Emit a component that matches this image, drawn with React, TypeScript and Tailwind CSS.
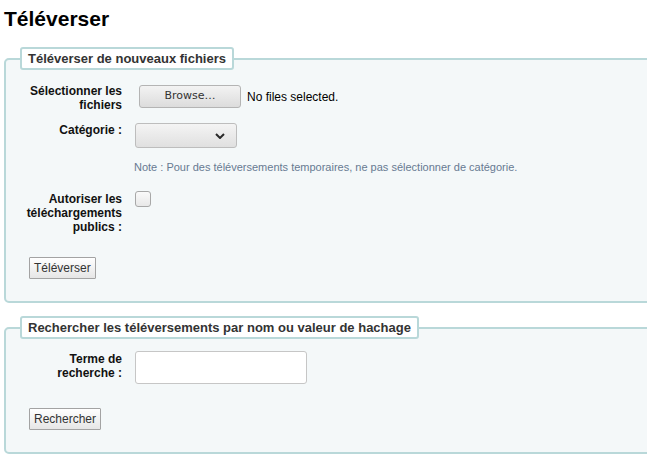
import React from "react";

const font = { fontFamily: '"Liberation Sans", Arial, sans-serif' };

function Label({ children }: { children: React.ReactNode }) {
  return (
    <div className="w-[102px] shrink-0 text-right text-[12px] leading-[14px] font-bold text-[#111]">
      {children}
    </div>
  );
}

function Legend({ children }: { children: React.ReactNode }) {
  return (
    <legend className="ml-0 rounded-[3px] border-2 border-[#b9d8d9] bg-white px-[6px] py-[2px] text-[13px] leading-[15px] font-bold text-[#333]">
      {children}
    </legend>
  );
}

function PlainButton({ children }: { children: React.ReactNode }) {
  return (
    <button
      type="button"
      className="h-[22px] rounded-[1px] border border-[#a3a3a3] bg-gradient-to-b from-white to-[#e6e6e6] px-[4px] text-[12px] leading-[14px] text-[#333]"
    >
      {children}
    </button>
  );
}

export default function App() {
  return (
    <div className="h-[460px] w-full overflow-hidden bg-white" style={font}>
      <h1 className="ml-[4px] mt-[7px] text-[21px] leading-[24px] font-bold text-black">Téléverser</h1>

      <fieldset className="-mr-[30px] ml-[4px] mt-[16px] rounded-[5px] border-2 border-[#b9d8d9] bg-[#f4f8f9] px-[14px] pb-[22px]">
        <Legend>Téléverser de nouveaux fichiers</Legend>

        <div className="mt-[14px] flex items-start">
          <Label>
            Sélectionner les
            <br />
            fichiers
          </Label>
          <div className="ml-[17px] mt-[1px] flex items-center">
            <button
              type="button"
              className="h-[23px] w-[102px] rounded-[3px] border border-[#b4b4b4] bg-gradient-to-b from-[#f3f3f3] to-[#dcdcdc] text-[11px] text-[#333]"
              style={{ fontFamily: '"DejaVu Sans", sans-serif' }}
            >
              Browse…
            </button>
            <span className="ml-[6px] text-[12px] text-black">No files selected.</span>
          </div>
        </div>

        <div className="mt-[11px] flex items-start">
          <Label>Catégorie :</Label>
          <div className="ml-[13px] flex h-[25px] w-[102px] items-center justify-end rounded-[3px] border border-[#bdbdbd] bg-gradient-to-b from-[#f4f4f4] to-[#e0e0e0] pr-[11px]">
            <svg width="10" height="6" viewBox="0 0 10 6">
              <polyline points="1,1 5,5 9,1" fill="none" stroke="#2a2a2a" strokeWidth="2" />
            </svg>
          </div>
        </div>

        <p className="ml-[114px] mt-[13px] text-[11px] leading-[13px] text-[#677a92]">
          Note : Pour des téléversements temporaires, ne pas sélectionner de catégorie.
        </p>

        <div className="mt-[18px] flex items-start">
          <Label>
            Autoriser les
            <br />
            téléchargements
            <br />
            publics :
          </Label>
          <div className="-mt-[1px] ml-[13px] h-[16px] w-[16px] rounded-[3px] border border-[#a8a8a8] bg-gradient-to-b from-[#fafafa] to-[#e8e8e8]" />
        </div>

        <div className="ml-[9px] mt-[23px] flex">
          <PlainButton>Téléverser</PlainButton>
        </div>
      </fieldset>

      <fieldset className="-mr-[30px] ml-[4px] mt-[13px] rounded-[5px] border-2 border-[#b9d8d9] bg-[#f4f8f9] px-[14px] pb-[22px]">
        <Legend>Rechercher les téléversements par nom ou valeur de hachage</Legend>

        <div className="mt-[12px] flex items-start">
          <div className="mt-[1px]">
            <Label>
              Terme de
              <br />
              recherche :
            </Label>
          </div>
          <input
            type="text"
            className="ml-[13px] h-[33px] w-[172px] rounded-[3px] border border-[#c6c6c6] bg-white"
          />
        </div>

        <div className="ml-[9px] mt-[24px] flex">
          <PlainButton>Rechercher</PlainButton>
        </div>
      </fieldset>
    </div>
  );
}
